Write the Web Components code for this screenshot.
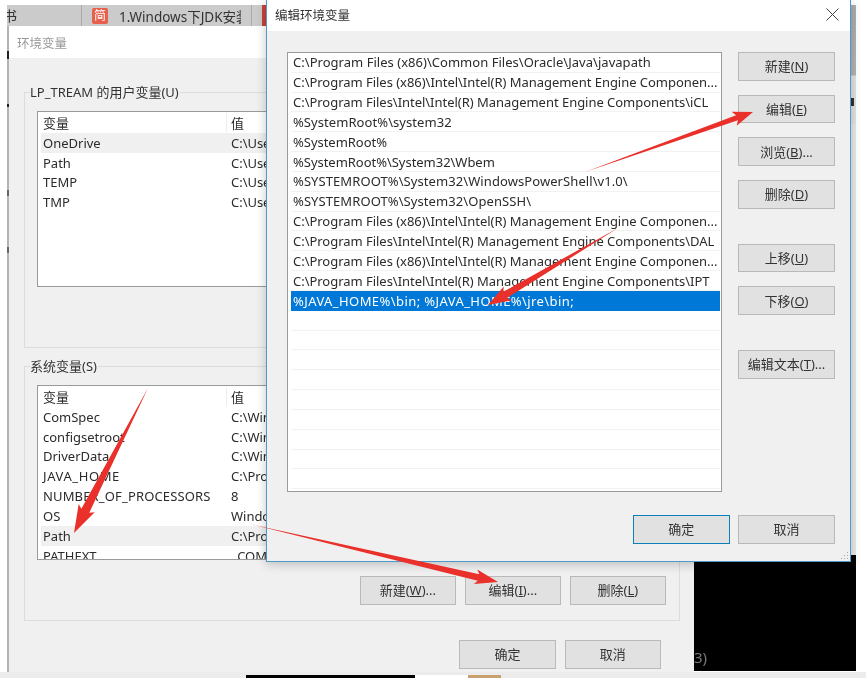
<!DOCTYPE html>
<html lang="zh">
<head>
<meta charset="utf-8">
<title>环境变量</title>
<style>
  html, body { margin: 0; height: 100%; background: #fff; overflow: hidden; }
  body { font: 13px "Noto Sans", "Noto Sans CJK SC", sans-serif; color: #2b2b2b; filter: blur(.3px); }
  x-window.back { left: 9px; top: 26px; width: 685px; height: 646px; }
  x-window.front { left: 266px; top: 0; width: 585px; height: 562px; z-index: 2; }
  .black { position: absolute; left: 694px; top: 555px; width: 162px; height: 116px; background: #000; color: #777; font-size: 15px; }
  .black span { position: absolute; left: 0; top: 92px; }
  .strip-r { position: absolute; left: 851px; top: 5px; width: 5px; height: 550px; background: linear-gradient(#a9aeb2 0, #b4b4b4 70px, #e2e2e2 71px, #e2e2e2 118px, #e9e9e9 119px); }
  .mark-r { position: absolute; left: 851px; top: 98px; width: 3px; height: 8px; background: #333; }
  .strip-l { position: absolute; left: 7px; top: 26px; width: 2px; height: 646px; background: #b4b4b4; }
  .tick { position: absolute; left: 7px; width: 2px; height: 8px; background: #222; }
  .floor { position: absolute; left: 0; right: 0; top: 672px; height: 6px; background: #ececec; }
  .floor i { position: absolute; top: 3px; height: 3px; }
  .stack { display: flex; flex-direction: column; gap: 14.2px; }
  .stack x-btn.far { margin-top: 21px; }
  .front-body { display: grid; grid-template-columns: 435px 97px; column-gap: 16px; padding: 21px 16px 0 20px; }
  .foot { grid-column: 1 / 3; display: flex; justify-content: flex-end; gap: 8.5px; margin-top: 23px; }
  .foot x-btn[default] { width: 96.5px; }
  .back-body { padding: 25px 14px 0 15px; display: flex; flex-direction: column; gap: 9px; }
  .row-btns { display: flex; justify-content: flex-end; gap: 8.7px; margin-top: 16px; }
  .row-btns x-btn, .dlg-btns x-btn { width: 96.3px; }
  .dlg-btns { display: flex; justify-content: flex-end; gap: 9px; padding-right: 19px; margin-top: 10px; }
  .grip { position: absolute; right: 2px; bottom: 2px; width: 8px; height: 8px; background: radial-gradient(circle at 50% 50%, #a8a8a8 0 .8px, transparent 1px) 0 0 / 3px 3px; clip-path: polygon(100% 0, 100% 100%, 0 100%); }
</style>
</head>
<body>
  <x-tabbar></x-tabbar>
  <div class="strip-l"></div>
  <div class="tick" style="top:51px"></div>
  <div class="tick" style="top:104px;height:3px"></div>
  <div class="tick" style="top:190px;height:6px;background:#666"></div>
  <div class="tick" style="top:247px;height:6px;background:#666"></div>
  <div class="strip-r"></div>
  <div class="mark-r"></div>
  <div class="black"><span>3)</span></div>
  <div class="floor">
    <i style="left:246px;width:169px;background:#000"></i>
    <i style="left:415px;width:53px;background:#fff"></i>
    <i style="left:468px;width:33px;background:#c9a06f"></i>
  </div>

  <x-window class="back" title-text="环境变量" dim>
    <div class="back-body">
      <x-group label="LP_TREAM 的用户变量(U)" style="height:265px">
        <x-list style="height:176px">
          <x-row name="变量" value="值" head></x-row>
          <x-row name="OneDrive" value="C:\Use" hot></x-row>
          <x-row name="Path" value="C:\Use"></x-row>
          <x-row name="TEMP" value="C:\Use"></x-row>
          <x-row name="TMP" value="C:\Use"></x-row>
        </x-list>
      </x-group>
      <x-group label="系统变量(S)" style="height:264px">
        <x-list style="height:175px">
          <x-row name="变量" value="值" head></x-row>
          <x-row name="ComSpec" value="C:\Win"></x-row>
          <x-row name="configsetroot" value="C:\Win"></x-row>
          <x-row name="DriverData" value="C:\Win"></x-row>
          <x-row name="JAVA_HOME" value="C:\Pro" style="--name-spacing:.6px"></x-row>
          <x-row name="NUMBER_OF_PROCESSORS" value="8" style="--name-spacing:.15px"></x-row>
          <x-row name="OS" value="Windo"></x-row>
          <x-row name="Path" value="C:\Pro" hot></x-row>
          <x-row name="PATHEXT" value=" .COM"></x-row>
        </x-list>
        <div class="row-btns">
          <x-btn><span>新建(<u>W</u>)...</span></x-btn>
          <x-btn><span>编辑(<u>I</u>)...</span></x-btn>
          <x-btn><span>删除(<u>L</u>)</span></x-btn>
        </div>
      </x-group>
      <div class="dlg-btns">
        <x-btn>确定</x-btn>
        <x-btn>取消</x-btn>
      </div>
    </div>
  </x-window>

  <x-window class="front" title-text="编辑环境变量" closable>
    <div class="front-body">
      <x-list style="height:440px">
        <x-row text="C:\Program Files (x86)\Common Files\Oracle\Java\javapath" style="letter-spacing:.03px"></x-row>
        <x-row text="C:\Program Files (x86)\Intel\Intel(R) Management Engine Componen..."></x-row>
        <x-row text="C:\Program Files\Intel\Intel(R) Management Engine Components\iCL"></x-row>
        <x-row text="%SystemRoot%\system32" style="letter-spacing:.07px"></x-row>
        <x-row text="%SystemRoot%"></x-row>
        <x-row text="%SystemRoot%\System32\Wbem"></x-row>
        <x-row text="%SYSTEMROOT%\System32\WindowsPowerShell\v1.0\" style="letter-spacing:.08px"></x-row>
        <x-row text="%SYSTEMROOT%\System32\OpenSSH\" style="letter-spacing:.08px"></x-row>
        <x-row text="C:\Program Files (x86)\Intel\Intel(R) Management Engine Componen..."></x-row>
        <x-row text="C:\Program Files\Intel\Intel(R) Management Engine Components\DAL"></x-row>
        <x-row text="C:\Program Files (x86)\Intel\Intel(R) Management Engine Componen..."></x-row>
        <x-row text="C:\Program Files\Intel\Intel(R) Management Engine Components\IPT"></x-row>
        <x-row text="%JAVA_HOME%\bin; %JAVA_HOME%\jre\bin;" selected style="letter-spacing:.42px"></x-row>
        <x-row></x-row><x-row></x-row><x-row></x-row><x-row></x-row><x-row></x-row>
        <x-row></x-row><x-row></x-row><x-row></x-row><x-row></x-row>
      </x-list>
      <div class="stack">
        <x-btn><span>新建(<u>N</u>)</span></x-btn>
        <x-btn><span>编辑(<u>E</u>)</span></x-btn>
        <x-btn><span>浏览(<u>B</u>)...</span></x-btn>
        <x-btn><span>删除(<u>D</u>)</span></x-btn>
        <x-btn class="far"><span>上移(<u>U</u>)</span></x-btn>
        <x-btn><span>下移(<u>O</u>)</span></x-btn>
        <x-btn class="far"><span>编辑文本(<u>T</u>)...</span></x-btn>
      </div>
      <div class="foot">
        <x-btn default>确定</x-btn>
        <x-btn>取消</x-btn>
      </div>
    </div>
    <div class="grip"></div>
  </x-window>

  <x-arrows></x-arrows>

<script>
  // Title bar + body of a Windows 10 style dialog
  class XWindow extends HTMLElement {
    connectedCallback() {
      const dim = this.hasAttribute('dim');
      const close = this.hasAttribute('closable')
        ? `<svg class="close" width="13" height="13" viewBox="0 0 13 13"><path d="M.5.5l12 12M12.5.5l-12 12" stroke="#444" fill="none"/></svg>`
        : '';
      this.attachShadow({ mode: 'open' }).innerHTML = `
        <style>
          :host {
            position: absolute;
            display: flex;
            flex-direction: column;
            box-sizing: border-box;
            background: #f0f0f0;
            ${dim ? '' : 'border: 1px solid #4c9ac9; border-top: 0; box-shadow: 0 2px 10px rgba(0,0,0,.22);'}
          }
          .bar {
            display: flex;
            align-items: center;
            justify-content: space-between;
            box-sizing: border-box;
            height: ${dim ? 32 : 31}px;
            flex: none;
            background: #fff;
            padding: ${dim ? '0 0 0 8px' : '0 11px 2px 8px'};
            font-size: 12.5px;
            color: ${dim ? '#999' : '#333'};
          }
        </style>
        <div class="bar"><span>${this.getAttribute('title-text')}</span>${close}</div>
        <slot></slot>`;
    }
  }

  class XGroup extends HTMLElement {
    connectedCallback() {
      this.attachShadow({ mode: 'open' }).innerHTML = `
        <style>
          :host { display: block; box-sizing: border-box; }
          fieldset {
            box-sizing: border-box;
            height: 100%;
            margin: 0;
            padding: 10px 13px 0 12px;
            border: 1px solid #dcdcdc;
          }
          legend { padding: 0 1px 0 0; margin-left: -7px; line-height: 18px; font-size: 13px; color: #333; }
        </style>
        <fieldset><legend>${this.getAttribute('label')}</legend><slot></slot></fieldset>`;
    }
  }

  class XList extends HTMLElement {
    constructor() {
      super();
      this.attachShadow({ mode: 'open' }).innerHTML = `
        <style>
          :host {
            display: block;
            box-sizing: border-box;
            background: #fff;
            border: 1px solid #9a9a9a;
            overflow: hidden;
          }
        </style>
        <slot></slot>`;
    }
  }

  // Either one text cell (text=) or a name/value pair (name=, value=)
  class XRow extends HTMLElement {
    connectedCallback() {
      const pair = this.hasAttribute('name');
      const sel = this.hasAttribute('selected');
      const hot = this.hasAttribute('hot');
      const head = this.hasAttribute('head');
      const cells = pair
        ? `<span class="n">${this.getAttribute('name')}</span><span class="v">${this.getAttribute('value')}</span>`
        : `<span>${this.getAttribute('text') || '&nbsp;'}</span>`;
      this.attachShadow({ mode: 'open' }).innerHTML = `
        <style>
          :host {
            display: flex;
            align-items: center;
            box-sizing: border-box;
            height: 19.83px;
            margin: 0 1px 0 3px;
            padding-left: 2px;
            white-space: pre;
            font-size: 13px;
            letter-spacing: -.03px;
            ${pair ? '' : 'border-bottom: 1px solid #f2f2f2;'}
            ${sel ? 'background: #0078d7; color: #fff; border-bottom: 0;' : ''}
            ${hot ? 'background: #f0f0f0;' : ''}
            ${head ? 'margin-top: 1px;' : ''}
          }
          .n { width: 188px; flex: none; letter-spacing: var(--name-spacing, 0); }
          .v { flex: none; ${head ? 'border-left: 1px solid #eee; margin-left: -5px; padding-left: 4px;' : ''} }
        </style>
        ${cells}`;
    }
  }

  class XBtn extends HTMLElement {
    constructor() {
      super();
      this.attachShadow({ mode: 'open' }).innerHTML = `
        <style>
          :host {
            display: flex;
            align-items: center;
            justify-content: center;
            box-sizing: border-box;
            width: 97px;
            height: 28.5px;
            padding-bottom: 1px;
            flex: none;
            background: #e1e1e1;
            border: 1px solid #b9b9b9;
            font-size: 13px;
            color: #333;
          }
          :host([default]) { border: 1.5px solid #0f7fb8; }
        </style>
        <slot></slot>`;
    }
  }

  class XTabbar extends HTMLElement {
    connectedCallback() {
      this.attachShadow({ mode: 'open' }).innerHTML = `
        <style>
          :host {
            position: absolute;
            left: 7px;
            top: 5px;
            width: 260px;
            height: 21px;
            display: flex;
            align-items: center;
            background: #cbcbcb;
            color: #333;
            overflow: hidden;
          }
          .first { width: 75px; height: 100%; flex: none; box-sizing: border-box; border-right: 1px solid #aaa; overflow: hidden; line-height: 21px; font-size: 14px; }
          .first span { display: inline-block; margin-left: -4px; }
          .icon {
            width: 16px; height: 16px; flex: none; border-radius: 2px;
            background: #e8604c; color: #fff; font-size: 12px; line-height: 16px; text-align: center;
          }
          .title { width: 122px; margin: 0 8px 0 11px; flex: none; overflow: hidden; white-space: nowrap; font-size: 13.5px; }
          .tab { display: flex; align-items: center; width: 170px; height: 100%; flex: none; box-sizing: border-box; padding-left: 10px; border-right: 1px solid #aaa; }
          .next { width: 16px; height: 100%; margin-left: 10px; flex: none; background: #c9423a; }
        </style>
        <div class="first"><span>书</span></div>
        <div class="tab"><span class="icon">简</span><span class="title">1.Windows下JDK安装</span></div>
        <div class="next"></div>`;
    }
  }

  // Red hand-drawn annotation arrows: thin tail, wider towards the head
  class XArrows extends HTMLElement {
    connectedCallback() {
      const arrows = [
        { x1: 585, y1: 172, x2: 753, y2: 112, head: 17, wing: 7.5, shaft: 2.6 },
        { x1: 618, y1: 228, x2: 488, y2: 305, head: 20, wing: 8, shaft: 3.6 },
        { x1: 148, y1: 388, x2: 74, y2: 533, head: 25, wing: 9, shaft: 4.4 },
        { x1: 250, y1: 524, x2: 498, y2: 582, head: 20, wing: 7.5, shaft: 3.3 }
      ];
      const shapes = arrows.map(a => {
        const len = Math.hypot(a.x2 - a.x1, a.y2 - a.y1);
        const ux = (a.x2 - a.x1) / len, uy = (a.y2 - a.y1) / len;
        const px = -uy, py = ux;
        const bx = a.x2 - ux * a.head, by = a.y2 - uy * a.head;
        const pts = [
          [a.x1, a.y1],
          [bx + px * a.shaft, by + py * a.shaft],
          [bx + px * a.wing - ux * 3, by + py * a.wing - uy * 3],
          [a.x2, a.y2],
          [bx - px * a.wing - ux * 3, by - py * a.wing - uy * 3],
          [bx - px * a.shaft, by - py * a.shaft]
        ];
        return `<polygon points="${pts.map(p => p.map(n => n.toFixed(1)).join(',')).join(' ')}"/>`;
      }).join('');
      this.attachShadow({ mode: 'open' }).innerHTML = `
        <style>
          :host { position: absolute; left: 0; top: 0; width: 866px; height: 678px; z-index: 5; pointer-events: none; }
          svg { display: block; }
          polygon { fill: #e9302a; }
        </style>
        <svg width="866" height="678" viewBox="0 0 866 678">${shapes}</svg>`;
    }
  }

  customElements.define('x-window', XWindow);
  customElements.define('x-group', XGroup);
  customElements.define('x-list', XList);
  customElements.define('x-row', XRow);
  customElements.define('x-btn', XBtn);
  customElements.define('x-tabbar', XTabbar);
  customElements.define('x-arrows', XArrows);
</script>
</body>
</html>
